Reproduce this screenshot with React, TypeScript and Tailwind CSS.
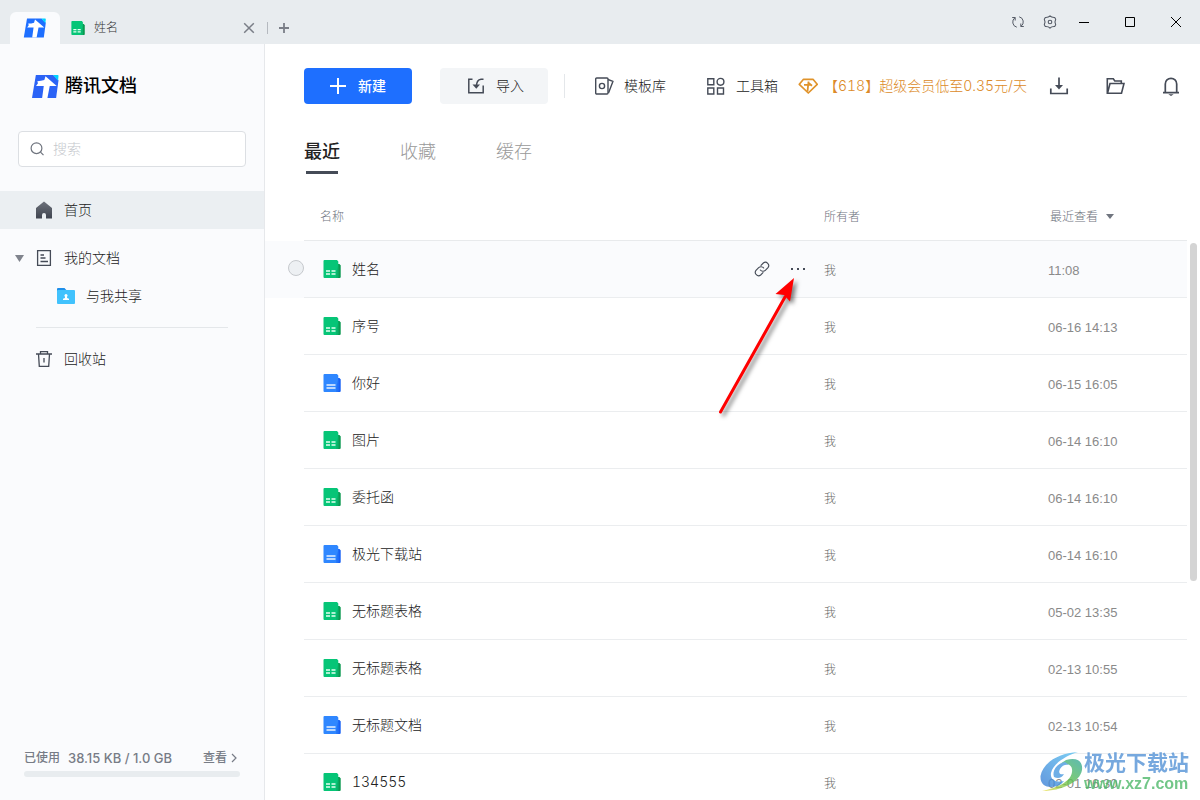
import React from 'react';

type DocKind = 'sheet' | 'doc';

interface DocRow {
  name: string;
  kind: DocKind;
  owner: string;
  viewed: string;
}

const rows: DocRow[] = [
  { name: '姓名', kind: 'sheet', owner: '我', viewed: '11:08' },
  { name: '序号', kind: 'sheet', owner: '我', viewed: '06-16 14:13' },
  { name: '你好', kind: 'doc', owner: '我', viewed: '06-15 16:05' },
  { name: '图片', kind: 'sheet', owner: '我', viewed: '06-14 16:10' },
  { name: '委托函', kind: 'sheet', owner: '我', viewed: '06-14 16:10' },
  { name: '极光下载站', kind: 'doc', owner: '我', viewed: '06-14 16:10' },
  { name: '无标题表格', kind: 'sheet', owner: '我', viewed: '05-02 13:35' },
  { name: '无标题表格', kind: 'sheet', owner: '我', viewed: '02-13 10:55' },
  { name: '无标题文档', kind: 'doc', owner: '我', viewed: '02-13 10:54' },
  { name: '134555', kind: 'sheet', owner: '我', viewed: '02-01 16:30' },
];

function Logo({ className, fill }: { className: string; fill: string }) {
  return (
    <svg viewBox="0 0 28 25" className={className} aria-hidden="true">
      <path d="M4 .5h18L27.500 6 25 24.500H0z" fill={fill} />
      <path d="M21.800.5h4.700a1 1 0 0 1 1 1.200L27 6.500z" fill="#00d2ff" />
      <path d="M5.500 7q4-.1 7.300-1.200L14 1.800 25.600 12h-7.200L16 24.500h-5.500L12.200 12H4.200l2-2.800z" fill="#fff" />
    </svg>
  );
}

function FileIcon({ kind, className }: { kind: DocKind; className: string }) {
  const sheet = kind === 'sheet';
  return (
    <svg viewBox="0 0 18 18" className={className} aria-hidden="true">
      <path d="M13 4h3.500l1.200 1.500V17a1 1 0 0 1-1 1H13z" fill={sheet ? '#0a9950' : '#1660f5'} />
      <path
        d="M1.500 0H14l1.300 1.500V17a1 1 0 0 1-1 1H1.500a1 1 0 0 1-1-1V1a1 1 0 0 1 1-1z"
        fill={sheet ? '#06c577' : '#2f87ff'}
      />
      <path d="M15.300 4.500V17a1 1 0 0 1-1 1h-1V14z" fill={sheet ? '#0bb068' : '#2272f8'} />
      {sheet ? (
        <path d="M3 11h4M8.500 11h4M3 14h4M8.500 14h4" stroke="#e6fff2" strokeWidth="1.600" />
      ) : (
        <path d="M3.500 11h9M3.500 14h9" stroke="#e8f2ff" strokeWidth="1.500" />
      )}
    </svg>
  );
}

function TitleBar() {
  return (
    <header className="flex h-11 shrink-0 justify-between bg-[#e8ecef]">
      <nav className="flex items-end pl-[10px]" aria-label="标签页">
        <a href="#home" aria-label="首页" className="flex h-8 w-[50px] items-center justify-center rounded-t-md bg-[#fafbfd]">
          <Logo className="h-[20px] w-6" fill="#1e6fff" />
        </a>
        <div className="flex h-8 w-[195px] items-center gap-[9px] pl-[11px]">
          <FileIcon kind="sheet" className="h-[14px] w-[14px]" />
          <span className="flex-1 text-xs text-[#333]">姓名</span>
          <button aria-label="关闭标签" className="text-[#7a7e87]">
            <svg viewBox="0 0 12 12" className="h-3 w-3" stroke="currentColor" strokeWidth="1.500" fill="none">
              <path d="M1.200 1.200l9.600 9.600M10.800 1.200l-9.600 9.600" />
            </svg>
          </button>
        </div>
        <div className="flex h-8 items-center gap-[10px] pl-3">
          <span className="h-3 w-px bg-[#b5b9bf]" />
          <button aria-label="新建标签" className="text-[#7a7e87]">
            <svg viewBox="0 0 12 12" className="h-3 w-3" stroke="currentColor" strokeWidth="1.800" fill="none">
              <path d="M6 1v10M1 6h10" />
            </svg>
          </button>
        </div>
      </nav>
      <div className="flex items-center pr-px">
        <div className="flex gap-4 pr-[3px] text-[#555b66]">
          <button aria-label="刷新">
            <svg viewBox="0 0 16 16" className="h-4 w-4" fill="none" stroke="currentColor" strokeWidth="1">
              <path d="M2.200 3.500h3v3M5 3.700a5.300 5.300 0 0 0 1.800 9.500M13.800 12.500h-3v-3M11 12.300a5.300 5.300 0 0 0-1.800-9.500" />
            </svg>
          </button>
          <button aria-label="设置">
            <svg viewBox="0 0 16 16" className="h-4 w-4" fill="none" stroke="currentColor" strokeWidth="1.100" strokeLinejoin="round">
              <path d="M2.300 5.200Q3.800 8 2.300 10.800L3.300 12.500Q6.500 12.300 8 14.100 9.500 12.300 12.700 12.500L13.700 10.800Q12.200 8 13.700 5.200L12.700 3.500Q9.500 3.700 8 1.900 6.500 3.700 3.300 3.500z" />
              <circle cx="8" cy="8" r="1.800" />
            </svg>
          </button>
        </div>
        <button aria-label="最小化" className="flex h-11 w-[46px] items-center justify-center">
          <svg viewBox="0 0 10 10" className="h-[10px] w-[10px]" stroke="#000">
            <path d="M0 5.500h10" />
          </svg>
        </button>
        <button aria-label="最大化" className="flex h-11 w-[46px] items-center justify-center">
          <svg viewBox="0 0 10 10" className="h-[10px] w-[10px]" stroke="#000" fill="none">
            <path d="M.5.5h9v9h-9z" />
          </svg>
        </button>
        <button aria-label="关闭" className="flex h-11 w-[46px] items-center justify-center">
          <svg viewBox="0 0 10 10" className="h-[10px] w-[10px]" stroke="#000" fill="none">
            <path d="M0 0l10 10M10 0L0 10" />
          </svg>
        </button>
      </div>
    </header>
  );
}

function Sidebar() {
  return (
    <aside className="flex w-[265px] shrink-0 flex-col border-r border-[#e6e8eb] bg-[#fafbfd] text-sm text-[#222]">
      <div className="flex h-[84px] items-center gap-[6px] pl-8">
        <Logo className="h-[25px] w-[27px]" fill="#2b63f6" />
        <span className="text-lg font-medium text-black">腾讯文档</span>
      </div>
      <label className="mx-[18px] mt-[3px] flex h-9 items-center gap-2 rounded border border-[#dcdfe3] bg-white pl-[10px]">
        <svg viewBox="0 0 16 16" className="h-4 w-4 shrink-0" fill="none" stroke="#70757f" strokeWidth="1.200">
          <circle cx="7.500" cy="7.200" r="5.400" />
          <path d="M11.500 11.200l3 3" />
        </svg>
        <input
          type="search"
          aria-label="搜索"
          placeholder="搜索"
          className="w-full min-w-0 bg-transparent text-sm outline-none placeholder:text-[#c4c7cc]"
        />
      </label>
      <nav className="mt-6" aria-label="主导航">
        <a href="#home" className="flex h-[38px] items-center gap-3 bg-[#ebeff2] pl-9">
          <svg viewBox="0 0 16 18" className="h-[18px] w-4">
            <defs>
              <linearGradient id="home" x1="0" y1="0" x2="0" y2="1">
                <stop offset="0" stopColor="#6d727b" />
                <stop offset="1" stopColor="#3f444f" />
              </linearGradient>
            </defs>
            <path d="M8 0.500L16 7v10.500h-6V14a2 2 0 0 0-4 0v3.500H0V7z" fill="url(#home)" />
          </svg>
          首页
        </a>
        <a href="#mine" className="mt-[10px] flex h-[38px] items-center gap-3 pl-[15px]">
          <svg viewBox="0 0 9 7" className="h-[7px] w-[9px]" fill="#80848d">
            <path d="M0 0h9L4.500 7z" />
          </svg>
          <svg viewBox="0 0 16 16" className="h-4 w-4" fill="none" stroke="#454b57" strokeWidth="1.300">
            <path d="M1.600.7h12.800v14.600H1.600z" />
            <path d="M4.500 5h3.500M4.500 8h5M4.500 11.500h7.500" />
          </svg>
          我的文档
        </a>
        <a href="#shared" className="flex h-[38px] items-center gap-[11px] pl-[57px]">
          <svg viewBox="0 0 18 16" className="h-4 w-[18px]">
            <path d="M0 1a1 1 0 0 1 1-1h6.500l1.800 2v4H0z" fill="#1e8fea" />
            <rect y="2" width="18" height="14" rx="1" fill="#41c2fd" />
            <circle cx="9" cy="7.500" r="1.500" fill="#fff" />
            <path d="M8.200 8h1.600l.3 2 1.900.8v1.200H6v-1.200l1.900-.8z" fill="#fff" />
          </svg>
          与我共享
        </a>
        <hr className="mx-9 mt-3 border-[#e4e7ea]" />
        <a href="#trash" className="mt-3 flex h-[38px] items-center gap-3 pl-9">
          <svg viewBox="0 0 16 16" className="h-4 w-4" fill="none" stroke="#454b57" strokeWidth="1.300">
            <path d="M0 3h16M4.500 3V.7h7V3M2.500 3l.8 12.300h9.400L13.500 3M8 7v4.500" />
          </svg>
          回收站
        </a>
      </nav>
      <footer className="mt-auto px-6 pb-[23px] text-xs text-[#777c86]">
        <div className="flex items-center font-medium">
          <span>已使用</span>
          <span className="ml-2 text-[13px] leading-4">38.15 KB / 1.0 GB</span>
          <a href="#storage" className="ml-auto flex items-center gap-1">
            查看
            <svg viewBox="0 0 9 10" className="h-[10px] w-[9px]" fill="none" stroke="currentColor" strokeWidth="1.200">
              <path d="M1 1l4 4-4 4" />
            </svg>
          </a>
        </div>
        <div className="mt-[5px] h-[6px] rounded-sm bg-[#e8ecef]" />
      </footer>
    </aside>
  );
}

function Toolbar() {
  return (
    <div className="flex items-center whitespace-nowrap pl-[39px] pr-[19px] pt-6 text-sm text-[#222]">
      <button className="flex h-9 w-[108px] items-center justify-center gap-3 rounded bg-[#1e6fff] font-medium text-white">
        <svg viewBox="0 0 16 16" className="h-4 w-4" stroke="currentColor" strokeWidth="2">
          <path d="M8 0v16M0 8h16" />
        </svg>
        新建
      </button>
      <button className="ml-7 flex h-9 w-[108px] items-center justify-center gap-3 rounded bg-[#f3f5f7] pl-1">
        <svg viewBox="0 0 16 16" className="h-4 w-4" fill="none" stroke="#454b57" strokeWidth="1.500">
          <path d="M4.500 1.200H.8v13.600h14.400V7.500M15.500 1.200h-2.500Q8.500 1.500 8.300 9" />
          <path d="M4.500 6.500h7.500L8.300 10.800z" fill="#454b57" stroke="none" />
        </svg>
        导入
      </button>
      <span className="ml-4 h-6 w-px bg-[#e4e7ea]" />
      <button className="ml-[29px] flex items-center gap-[10px]">
        <svg viewBox="0 0 20 20" className="h-5 w-5" fill="none" stroke="#454b57" strokeWidth="1.400" strokeLinejoin="round">
          <rect x="1.700" y="2" width="12.300" height="16" rx="1" />
          <circle cx="8" cy="10" r="2.600" />
          <path d="M14 3.500l5 1.800L14.500 17" />
        </svg>
        模板库
      </button>
      <button className="ml-10 flex items-center gap-[10px]">
        <svg viewBox="0 0 20 20" className="h-5 w-5" fill="none" stroke="#454b57" strokeWidth="1.400">
          <path d="M1.800 2.800h6v6h-6zM1.800 12h6v6h-6zM11.500 12h6v6h-6z" />
          <circle cx="14.500" cy="5.800" r="3.400" />
        </svg>
        工具箱
      </button>
      <a href="#vip" className="ml-5 flex items-center gap-[6px] text-[#dc8a28]">
        <svg viewBox="0 0 20 20" className="h-5 w-5" fill="none" stroke="#e0932b" strokeWidth="1.700" strokeLinejoin="round">
          <path d="M5.500 3.300h9.500L19.200 8.300 10.300 17 1.300 8.300z" />
          <path d="M10.500 5.500l-1 10M10 6.500l4 3.300M6 8.800h7.500" strokeWidth="1.800" />
        </svg>
        <span className="tabular-nums">【618】超级会员低至0.35元/天</span>
      </a>
      <div className="ml-auto flex gap-9 text-[#454b57]">
        <button aria-label="下载">
          <svg viewBox="0 0 20 20" className="h-5 w-5" fill="none" stroke="currentColor" strokeWidth="1.700">
            <path d="M10 1.500V12M1.800 12.500v5h16.400v-5" />
            <path d="M6 9h8L10 13.500z" fill="currentColor" stroke="none" />
          </svg>
        </button>
        <button aria-label="文件夹">
          <svg viewBox="0 0 20 20" className="h-5 w-5" fill="none" stroke="currentColor" strokeWidth="1.600">
            <path d="M2.300 17.500V2.800h6l1.500 2.200h6.500V7.500M2.500 17.200L5 7.500h14l-2.500 9.700z" />
          </svg>
        </button>
        <button aria-label="通知">
          <svg viewBox="0 0 20 20" className="h-5 w-5" fill="none" stroke="currentColor" strokeWidth="1.700">
            <path d="M4.300 16.500V8a5.700 5.700 0 0 1 11.400 0V16.500M2 16.700h16" />
            <path d="M7.300 18.300h5.400L10 20z" fill="currentColor" stroke="none" />
          </svg>
        </button>
      </div>
    </div>
  );
}

function DocTable() {
  return (
    <table className="w-full table-fixed border-separate border-spacing-0 text-left">
      <colgroup>
        <col className="w-[39px]" />
        <col />
        <col className="w-[100px]" />
        <col className="w-[224px]" />
        <col className="w-[139px]" />
      </colgroup>
      <thead>
        <tr className="h-[50px] text-xs text-[#6f747e]">
          <td />
          <th scope="col" colSpan={2} className="border-b border-[#e8eaec] pl-4 pt-[2px] font-light">名称</th>
          <th scope="col" className="border-b border-[#e8eaec] pt-[2px] font-light">所有者</th>
          <th scope="col" className="border-b border-[#e8eaec] pt-[2px] font-light">
            <button className="flex items-center gap-2 pl-[2px]">
              最近查看
              <svg viewBox="0 0 8 5" className="h-[5px] w-2" fill="#70757f">
                <path d="M0 0h8L4 5z" />
              </svg>
            </button>
          </th>
        </tr>
      </thead>
      <tbody>
        {rows.map((row, i) => {
          const active = i === 0;
          return (
            <tr key={i} className={active ? 'h-[57px] bg-[#fafbfd]' : 'h-[57px]'}>
              <td className="pb-[3px] pl-[23px]">
                {active && (
                  <input
                    type="checkbox"
                    aria-label={`选择 ${row.name}`}
                    className="block h-4 w-4 appearance-none rounded-full border border-[#c6c9cd] bg-[#edf0f3]"
                  />
                )}
              </td>
              <td className="border-b border-[#ebedef] pl-[19px]">
                <a href="#doc" className="flex items-center gap-[11px] text-sm tabular-nums text-[#222]">
                  <FileIcon kind={row.kind} className="h-[18px] w-[18px]" />
                  {row.name}
                </a>
              </td>
              <td className="border-b border-[#ebedef]">
                {active && (
                  <div className="flex items-center gap-5 pl-[30px] text-[#454b57]">
                    <button aria-label="复制链接">
                      <svg viewBox="0 0 24 24" className="h-4 w-4" fill="none" stroke="currentColor" strokeWidth="1.700" strokeLinecap="round">
                        <path d="M9.500 13.500a5 5 0 0 0 7.500.5l4-4a5 5 0 0 0-7-7l-3.500 3.500" />
                        <path d="M14.500 10.500a5 5 0 0 0-7.500-.5l-4 4a5 5 0 0 0 7 7l3.500-3.500" />
                      </svg>
                    </button>
                    <button aria-label="更多">
                      <svg viewBox="0 0 16 16" className="h-4 w-4" fill="currentColor">
                        <path d="M1 7h2v2H1zM7 7h2v2H7zM13 7h2v2h-2z" />
                      </svg>
                    </button>
                  </div>
                )}
              </td>
              <td className="border-b border-[#ebedef] pt-[3px] text-xs text-[#666]">{row.owner}</td>
              <td className="border-b border-[#ebedef] pt-[3px] font-['Liberation_Sans',sans-serif] text-[13px] text-[#8a8a8a]">{row.viewed}</td>
            </tr>
          );
        })}
      </tbody>
    </table>
  );
}

function Pointer() {
  return (
    <svg
      viewBox="0 0 100 150"
      className="pointer-events-none absolute left-[445px] top-[226px] h-[150px] w-[100px] drop-shadow-[3px_3px_2px_rgba(0,0,0,0.5)]"
      aria-hidden="true"
    >
      <path d="M10.500 142L75 27" stroke="#f00" strokeWidth="3" strokeLinecap="round" />
      <path d="M84 8L65.500 24 74 25 80 31.500z" fill="#f00" />
    </svg>
  );
}

function Watermark() {
  return (
    <div className="pointer-events-none absolute bottom-[7px] right-[11px] flex items-center opacity-80">
      <svg viewBox="0 0 44 42" className="h-[42px] w-11" aria-hidden="true">
        <defs>
          <linearGradient id="swirlBlue" x1="1" y1="0" x2="0" y2="1">
            <stop offset="0" stopColor="#5cc4f2" />
            <stop offset="1" stopColor="#3d7fd6" />
          </linearGradient>
          <linearGradient id="swirlGreen" x1="1" y1="0" x2="0" y2="1">
            <stop offset="0" stopColor="#35a9a0" />
            <stop offset="0.500" stopColor="#5fc04f" />
            <stop offset="1" stopColor="#f3e14a" />
          </linearGradient>
        </defs>
        <path d="M38 1C18 2 3 12 .5 25 0 33 5 36 11 36 17 36 22 33 24 30 16 32 10 29 11 22 13 13 25 5 38 1z" fill="url(#swirlBlue)" />
        <path d="M26 9C38 6 43 11 42 19 40 31 22 40 2 40 16 37 31 31 32 21 33 14 28 12 20 13z" fill="url(#swirlGreen)" />
        <path d="M25 11C16 13 12 20 14 26 18 28 22 27 24 23 20 24 18 22 20 18 22 14 26 13 29 14z" fill="#4b9be0" />
      </svg>
      <div className="flex flex-col">
        <span className="text-[21px] font-bold leading-6 text-[#5593d6]">极光下载站</span>
        <span className="font-['Liberation_Sans'] text-base font-bold leading-[18px] text-[#4fb96b]">www.xz7.com</span>
      </div>
    </div>
  );
}

export default function App() {
  return (
    <div className="flex h-screen flex-col overflow-hidden bg-white font-['Inter','Noto_Sans_CJK_SC',sans-serif] font-light">
      <TitleBar />
      <div className="flex min-h-0 flex-1">
        <Sidebar />
        <main className="relative flex min-w-0 flex-1 flex-col">
          <Toolbar />
          <nav className="flex gap-[60px] pl-[39px] pt-[34px] text-lg leading-7 text-[#999]" aria-label="文档列表">
            <a href="#recent" className="flex flex-col items-center gap-[5px] font-medium text-[#222]">
              最近
              <span className="h-[3px] w-8 bg-[#454b57]" />
            </a>
            <a href="#starred">收藏</a>
            <a href="#cached">缓存</a>
          </nav>
          <div className="mt-[17px] flex min-h-0 flex-1 overflow-hidden">
            <div className="min-w-0 flex-1">
              <DocTable />
            </div>
            <div className="w-[13px] shrink-0 pl-[3px] pt-[52px]">
              <div className="h-[338px] w-[7px] rounded-full bg-[#d4d4d4]" />
            </div>
          </div>
          <Pointer />
          <Watermark />
        </main>
      </div>
    </div>
  );
}
